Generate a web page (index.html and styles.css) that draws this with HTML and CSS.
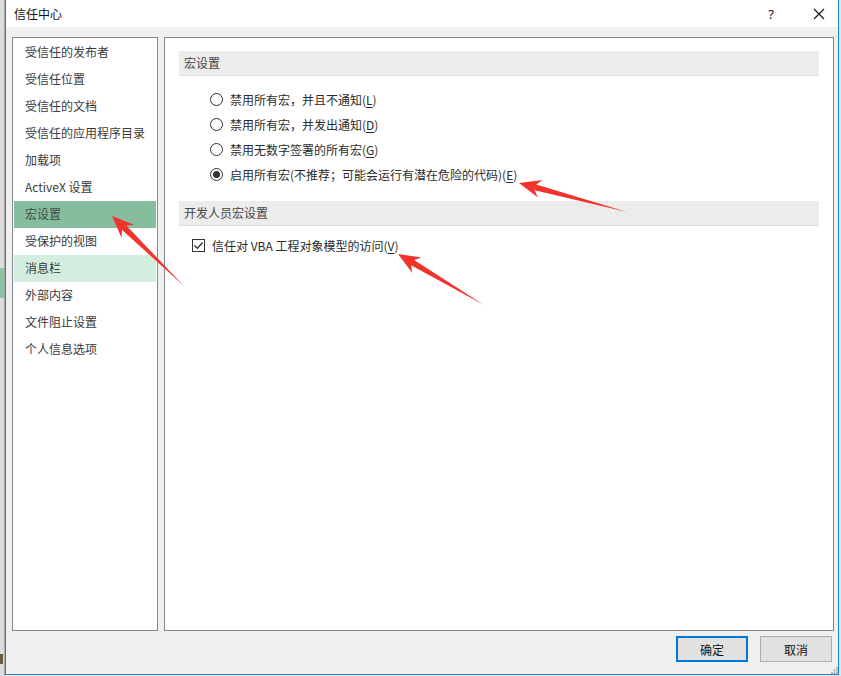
FILE: index.html
```html
<!DOCTYPE html>
<html lang="zh-CN">
<head>
<meta charset="utf-8">
<title>信任中心</title>
<link rel="stylesheet" href="styles.css">
</head>
<body>
<div class="desk">
  <div class="strip"><div class="strip-green"></div><div class="strip-mark"></div></div>
  <div class="dialog">
    <div class="titlebar">
      <span class="title">信任中心</span>
      <span class="tb-btn help">?</span>
      <span class="tb-btn close">
        <svg width="12" height="12" viewBox="0 0 12 12"><path d="M1 1 L11 11 M11 1 L1 11" stroke="#111" stroke-width="1.1" fill="none"/></svg>
      </span>
    </div>
    <div class="body">
      <div class="panels">
        <ul class="nav">
          <li>受信任的发布者</li>
          <li>受信任位置</li>
          <li>受信任的文档</li>
          <li>受信任的应用程序目录</li>
          <li>加载项</li>
          <li>ActiveX 设置</li>
          <li class="sel">宏设置</li>
          <li>受保护的视图</li>
          <li class="hover">消息栏</li>
          <li>外部内容</li>
          <li>文件阻止设置</li>
          <li>个人信息选项</li>
        </ul>
        <div class="content">
          <div class="sec-head">宏设置</div>
          <div class="options">
            <div class="opt"><span class="radio"></span>禁用所有宏，并且不通知(<u>L</u>)</div>
            <div class="opt"><span class="radio"></span>禁用所有宏，并发出通知(<u>D</u>)</div>
            <div class="opt"><span class="radio"></span>禁用无数字签署的所有宏(<u>G</u>)</div>
            <div class="opt"><span class="radio on"></span>启用所有宏(不推荐；可能会运行有潜在危险的代码)(<u>E</u>)</div>
          </div>
          <div class="sec-head">开发人员宏设置</div>
          <div class="checks">
            <div class="chk"><span class="box"><svg width="11" height="11" viewBox="0 0 11 11"><path d="M1.5 5.5 L4.3 8.3 L9.6 2.5" stroke="#222" stroke-width="1.2" fill="none"/></svg></span>信任对 VBA 工程对象模型的访问(<u>V</u>)</div>
          </div>
        </div>
      </div>
      <div class="buttons">
        <button class="btn primary">确定</button>
        <button class="btn">取消</button>
      </div>
      <div class="grip"><svg width="7" height="7" viewBox="0 0 7 7"><g fill="#b8b8b8"><rect x="5" y="0" width="2" height="2"/><rect x="2.5" y="2.5" width="2" height="2"/><rect x="5" y="2.5" width="2" height="2"/><rect x="0" y="5" width="2" height="2"/><rect x="2.5" y="5" width="2" height="2"/><rect x="5" y="5" width="2" height="2"/></g></svg></div>
    </div>
  </div>
</div>
<svg class="arrows" width="841" height="676" viewBox="0 0 841 676">
  <g fill="#f2332c">
    <polygon points="112,216 121.5,237.8 122.1,230.0 184,286 126.3,225.6 134.1,224.8"/>
    <polygon points="519,183 538,197.4 534.6,190.3 627,212 536.2,184.5 542.6,180"/>
    <polygon points="398,254 412.3,272.9 411.1,265.3 484,305 414.1,260.1 421.5,257.5"/>
  </g>
</svg>
</body>
</html>
```
FILE: styles.css
```css
* { box-sizing: border-box; }
html, body { margin: 0; padding: 0; }
body {
  width: 841px;
  height: 676px;
  overflow: hidden;
  background: #e6e6e6;
  font-family: "Noto Sans CJK SC", "Microsoft YaHei", sans-serif;
  font-size: 12px;
  color: #2b2b2b;
  position: relative;
}
.desk { display: flex; height: 676px; }
.strip {
  width: 5px;
  flex: none;
  background: #dcdcdc;
  border-right: 1px solid #a8a8a8;
  display: flex;
  flex-direction: column;
}
.strip-green { margin-top: 268px; height: 30px; background: #8dc2a2; }
.strip-mark { margin-top: 356px; height: 10px; background: #6b5a3a; width: 3px; }
.dialog {
  width: 834px;
  height: 675px;
  flex: none;
  border: 1px solid #1883d7;
  border-top: none;
  display: flex;
  flex-direction: column;
  background: #f0f0f0;
}
.titlebar {
  height: 27px;
  background: #fff;
  display: flex;
  align-items: center;
  padding-left: 8px;
  flex: none;
}
.title { color: #111; flex: 1; font-size: 12px; }
.tb-btn { display: flex; align-items: center; justify-content: center; color: #111; }
.help { width: 14px; font-size: 13px; margin-right: 34px; font-family: "Noto Sans", sans-serif; }
.close { width: 14px; margin-right: 12px; }
.body {
  flex: 1;
  padding: 10px 4px 0 6px;
  display: flex;
  flex-direction: column;
  position: relative;
}
.panels { display: flex; gap: 6px; height: 594px; }
.nav {
  list-style: none;
  margin: 0;
  padding: 1px;
  width: 146px;
  flex: none;
  background: #fff;
  border: 1px solid #828790;
}
.nav li {
  height: 27px;
  line-height: 25px;
  padding-left: 11px;
  color: #3a3a3a;
  white-space: nowrap;
}
.nav li.sel { background: #86bd9d; color: #3f4a44; }
.nav li.hover { background: #d3eedf; }
.content {
  flex: 1;
  background: #fff;
  border: 1px solid #828790;
  padding: 13px 14px 0 14px;
}
.sec-head {
  height: 25px;
  line-height: 23px;
  background: #ececec;
  border-bottom: 1px solid #dedede;
  padding-left: 5px;
  color: #444;
}
.options { padding: 11px 0 14px 31px; }
.opt, .chk {
  height: 25px;
  display: flex;
  align-items: center;
  color: #2b2b2b;
  white-space: nowrap;
}
.radio {
  width: 13px;
  height: 13px;
  border: 1px solid #333;
  border-radius: 50%;
  margin-right: 7px;
  flex: none;
  display: flex;
  align-items: center;
  justify-content: center;
  background: #fff;
}
.radio.on::after {
  content: "";
  width: 7px;
  height: 7px;
  border-radius: 50%;
  background: #333;
}
.checks { padding: 7px 0 0 13px; }
.box {
  width: 13px;
  height: 13px;
  border: 1px solid #333;
  margin-right: 7px;
  flex: none;
  display: flex;
  align-items: center;
  justify-content: center;
  background: #fff;
}
u { text-decoration: underline; text-underline-offset: 2px; }
.buttons {
  display: flex;
  justify-content: flex-end;
  gap: 12px;
  margin-top: 5px;
  padding-right: 2px;
}
.btn {
  width: 72px;
  height: 26px;
  background: #e1e1e1;
  border: 1px solid #adadad;
  font-family: "Noto Sans CJK SC", sans-serif;
  font-size: 12px;
  color: #111;
  padding: 0;
}
.btn.primary { border: 2px solid #0078d7; }
.grip { position: absolute; right: 0; bottom: 0; line-height: 0; }
.arrows { position: absolute; left: 0; top: 0; pointer-events: none; }
```
